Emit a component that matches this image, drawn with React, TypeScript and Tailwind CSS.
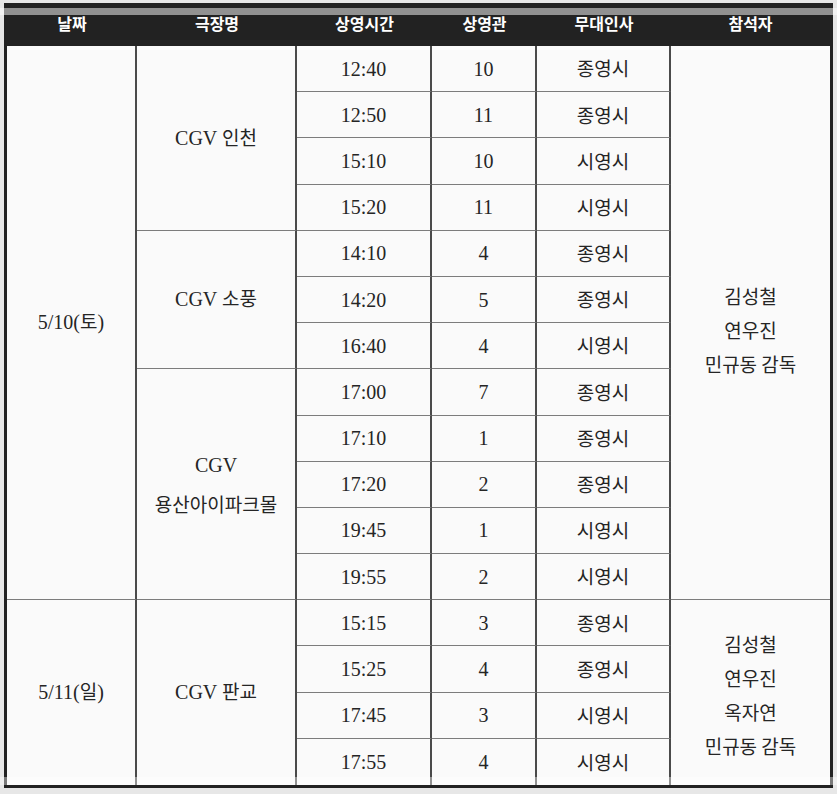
import React from "react";

const K = ({ children }: { children: React.ReactNode }) => (
  <span className="text-[19px]">{children}</span>
);

const times: [string, string, string][] = [
  ["12:40", "10", "종영시"],
  ["12:50", "11", "종영시"],
  ["15:10", "10", "시영시"],
  ["15:20", "11", "시영시"],
  ["14:10", "4", "종영시"],
  ["14:20", "5", "종영시"],
  ["16:40", "4", "시영시"],
  ["17:00", "7", "종영시"],
  ["17:10", "1", "종영시"],
  ["17:20", "2", "종영시"],
  ["19:45", "1", "시영시"],
  ["19:55", "2", "시영시"],
  ["15:15", "3", "종영시"],
  ["15:25", "4", "종영시"],
  ["17:45", "3", "시영시"],
  ["17:55", "4", "시영시"],
];

const headers = [
  { t: "날짜", w: "w-[130px]" },
  { t: "극장명", w: "w-[160px]" },
  { t: "상영시간", w: "w-[135px]" },
  { t: "상영관", w: "w-[105px]" },
  { t: "무대인사", w: "w-[134px]" },
  { t: "참석자", w: "w-[159px]" },
];

function GridCell({ cls, children, last, lastCol }: { cls: string; children: React.ReactNode; last?: boolean; lastCol?: boolean }) {
  return (
    <div
      className={
        "flex items-center justify-center text-center bg-[#fafafa] text-[#252525] " +
        (last ? "" : "border-b border-b-[#7c7c7c] ") +
        (lastCol ? "" : "border-r-2 border-r-[#4a4a4a] ") +
        cls
      }
    >
      {children}
    </div>
  );
}

const SANS = { fontFamily: '"Noto Sans CJK KR", sans-serif' };

export default function App() {
  return (
    <div className="relative w-[837px] h-[794px] bg-[#e7e7e7] overflow-hidden">
      <div className="absolute left-[4px] top-[3px] w-[829px] h-[785px] bg-[#222] px-[3px] pb-[3px] flex flex-col">
        <div className="flex h-[43px] shrink-0">
          {headers.map((h) => (
            <div
              key={h.t}
              className={
                "flex items-center justify-center pb-[4px] text-white text-[16px] font-bold " + h.w
              }
              style={SANS}
            >
              {h.t}
            </div>
          ))}
        </div>
        <div
          className="grid grid-cols-[130px_160px_135px_105px_134px_159px] grid-rows-[repeat(16,minmax(0,1fr))] h-[739px] bg-[#fafafa]"
          style={{ fontFamily: '"Liberation Serif", "Noto Sans CJK KR", serif' }}
        >
          <GridCell cls="col-start-1 row-start-1 row-span-12 text-[20px]">
            <span>5/10(<K>토</K>)</span>
          </GridCell>
          <GridCell cls="col-start-1 row-start-13 row-span-4 text-[20px]" last>
            <span>5/11(<K>일</K>)</span>
          </GridCell>

          <GridCell cls="col-start-2 row-start-1 row-span-4 text-[20px]">
            <span>CGV <K>인천</K></span>
          </GridCell>
          <GridCell cls="col-start-2 row-start-5 row-span-3 text-[20px]">
            <span>CGV <K>소풍</K></span>
          </GridCell>
          <GridCell cls="col-start-2 row-start-8 row-span-5 text-[20px] leading-[40px]">
            <span className="pt-[2px]">
              CGV
              <br />
              <K>용산아이파크몰</K>
            </span>
          </GridCell>
          <GridCell cls="col-start-2 row-start-13 row-span-4 text-[20px]" last>
            <span>CGV <K>판교</K></span>
          </GridCell>

          {times.map((r, i) => (
            <React.Fragment key={i}>
              <GridCell cls="col-start-3 text-[20px]" last={i === 15}>
                {r[0]}
              </GridCell>
              <GridCell cls="col-start-4 text-[20px]" last={i === 15}>
                {r[1]}
              </GridCell>
              <GridCell cls="col-start-5 text-[19px]" last={i === 15}>
                <span style={SANS}>{r[2]}</span>
              </GridCell>
            </React.Fragment>
          ))}

          <GridCell cls="col-start-6 row-start-1 row-span-12 text-[19px] leading-[34px]" lastCol>
            <span className="pt-[15px]" style={SANS}>
              김성철
              <br />
              연우진
              <br />
              민규동 감독
            </span>
          </GridCell>
          <GridCell cls="col-start-6 row-start-13 row-span-4 text-[19px] leading-[34px]" last lastCol>
            <span className="pt-[4px]" style={SANS}>
              김성철
              <br />
              연우진
              <br />
              옥자연
              <br />
              민규동 감독
            </span>
          </GridCell>
        </div>
      </div>
      <div className="absolute left-0 right-0 top-[8px] h-[7px] bg-white/50" />
      <div className="absolute left-0 right-0 top-[777px] h-[8px] bg-white/40" />
    </div>
  );
}
